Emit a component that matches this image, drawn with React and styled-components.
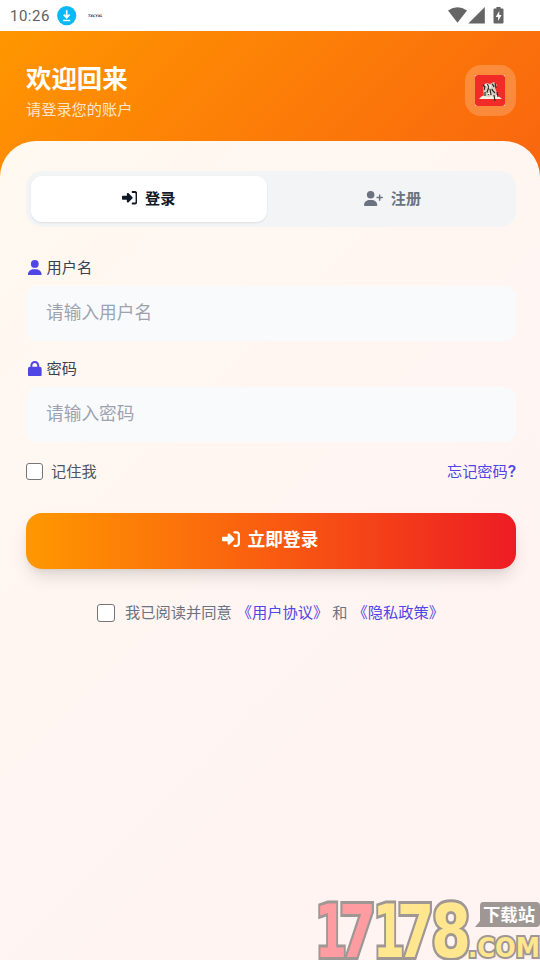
import React from "react";
import styled, { createGlobalStyle } from "styled-components";
import { FaRightToBracket, FaUserPlus, FaUser, FaLock } from "react-icons/fa6";

const GlobalStyle = createGlobalStyle`
  * { box-sizing: border-box; }
  body { margin: 0; overflow: hidden; }
  button, input { font-family: inherit; }
`;

const Screen = styled.div`
  position: relative;
  width: 540px;
  height: 960px;
  overflow: hidden;
  display: flex;
  flex-direction: column;
  font-family: Roboto, "Noto Sans CJK SC", sans-serif;
  background: #fff;
`;

const StatusBar = styled.div`
  height: 31px;
  flex: none;
  display: flex;
  align-items: center;
  padding: 0 35px 0 10px;
  color: #616161;
`;

const Clock = styled.span`
  width: 47px;
  padding-top: 1px;
  font-size: 15px;
  line-height: 30px;
  letter-spacing: 0.5px;
`;

const Notice = styled.svg`
  display: block;
  margin-right: 9px;
`;

const NoticeText = styled.span`
  flex: 1;
  padding-left: 2px;
  color: #23376b;
  font: italic 900 3.4px/8px "DejaVu Sans", sans-serif;
`;

const Page = styled.div`
  flex: 1;
  display: flex;
  flex-direction: column;
  background: linear-gradient(135deg, #ff9600 0%, #f9640f 100%) top / 100% 160px no-repeat;
`;

const Header = styled.header`
  height: 110px;
  flex: none;
  display: flex;
  justify-content: space-between;
  padding: 34px 24px 0 26px;
  color: #fff;
`;

const Title = styled.h1`
  margin: 0;
  font-size: 25.4px;
  line-height: 28px;
  font-weight: 700;
`;

const Subtitle = styled.p`
  margin: 5px 0 0;
  font-size: 15.2px;
  line-height: 24px;
  color: rgba(255, 255, 255, 0.8);
`;

const LogoTile = styled.div`
  width: 51px;
  height: 51px;
  display: grid;
  place-items: center;
  border-radius: 16px;
  background: rgba(255, 255, 255, 0.2);
`;

const Sheet = styled.main`
  flex: 1;
  padding: 30px 24px 0 26px;
  border-radius: 36px 36px 0 0;
  background: linear-gradient(135deg, #fff9f0 0%, #fff5f2 50%, #fff3f1 100%);
`;

const Tabs = styled.div`
  height: 56px;
  display: grid;
  grid-template-columns: 236px 1fr;
  padding: 5px;
  border-radius: 16px;
  background: #f3f4f6;
`;

const Tab = styled.button`
  display: flex;
  align-items: center;
  justify-content: center;
  gap: 8px;
  border: 0;
  padding: 0 ${(p) => (p.$active ? 1 : 0)}px 2px ${(p) => (p.$active ? 0 : 7)}px;
  border-radius: 11px;
  font-size: 15.2px;
  line-height: 20px;
  font-weight: 700;
  color: ${(p) => (p.$active ? "#111827" : "#6b7280")};
  background: ${(p) => (p.$active ? "#fff" : "transparent")};
  box-shadow: ${(p) => (p.$active ? "0 1px 2px rgba(0, 0, 0, 0.09)" : "none")};
`;

const Caption = styled.span`
  margin-top: 1px;
`;

const Field = styled.label`
  display: block;
  margin-top: ${(p) => p.$gap}px;
`;

const FieldLabel = styled.span`
  display: flex;
  align-items: center;
  gap: 4px;
  height: 20px;
  padding-left: 1px;
  font-size: 15.2px;
  line-height: 20px;
  color: #374151;
  svg { color: #4f46e5; margin-top: -1px; }
`;

const Input = styled.input`
  display: block;
  width: 100%;
  height: 55px;
  margin-top: 8px;
  padding: 0 20px 2px;
  border: 0;
  border-radius: 11px;
  outline: 0;
  background: #f9fafb;
  font-size: 17.7px;
  &::placeholder { color: #9ca3af; }
`;

const Options = styled.div`
  display: flex;
  align-items: center;
  height: 20px;
  margin-top: 18px;
  font-size: 15.2px;
  color: #4b5563;
`;

const Checkbox = styled.input`
  appearance: none;
  width: ${(p) => p.$size}px;
  height: ${(p) => p.$size}px;
  margin: 3px ${(p) => p.$space}px 0 0;
  border: 1.4px solid #767676;
  border-radius: 3px;
  background: #fff;
`;

const Link = styled.a`
  color: #4f46e5;
  margin-left: ${(p) => p.$left || 0};
`;

const Mark = styled.span`
  font-weight: 500;
  font-size: 17px;
`;

const Submit = styled.button`
  display: flex;
  align-items: center;
  justify-content: center;
  gap: 8px;
  width: 100%;
  height: 56px;
  margin-top: 33px;
  padding: 0 2px 4px 0;
  border: 0;
  border-radius: 16px;
  color: #fff;
  font-size: 17.7px;
  line-height: 24px;
  font-weight: 700;
  background: linear-gradient(90deg, #ff9800 0%, #f95c10 50%, #ed1c24 100%);
  box-shadow: 0 10px 18px -3px rgba(0, 0, 0, 0.13), 0 4px 7px -3px rgba(0, 0, 0, 0.08);
`;

const Agreement = styled.div`
  display: flex;
  align-items: center;
  height: 20px;
  margin-top: 32px;
  padding-left: 71px;
  font-size: 15.25px;
  white-space: nowrap;
  color: #6b7280;
`;

const Word = styled.span`
  margin: 0 5px 0 4px;
`;

const Watermark = styled.svg`
  position: absolute;
  right: 0;
  bottom: 0;
  text {
    font-family: "DejaVu Sans", sans-serif;
    font-weight: 700;
    paint-order: stroke;
    stroke: #9e9793;
    stroke-linejoin: miter;
  }
  .tag {
    font-family: "Noto Sans CJK SC", sans-serif;
    stroke: none;
  }
`;

const digits = [
  { char: "1", x: 5, width: 32, fill: "#ff9ca1" },
  { char: "7", x: 29, width: 37, fill: "#ff9ca1" },
  { char: "1", x: 63, width: 32, fill: "#ffe68f" },
  { char: "7", x: 87, width: 37, fill: "#ffe68f" },
  { char: "8", x: 121, width: 40, fill: "#ffe68f" },
];

function AppLogo() {
  return (
    <svg width="31" height="31" viewBox="0 0 31 31">
      <rect width="30" height="31" fill="#ffd6bd" />
      <rect width="30" height="31" rx="3" fill="#f12b28" />
      <path d="M4 24 7 21 11 20 22 20 27 24Z" fill="#f8efe3" />
      <path d="M9 10 12 8 15 9 19 7 22 10 20 13 22 18 20 23 17 21 14 22 9 21 8 14Z" fill="#d5d0c3" />
      <path d="M8 10 10 12 9 15M12 9 14 12 12 17 14 20M17 9 19 11 17 15 20 18M20 8 21 13M10 17 10 21M15 14 16 20M19 20 20 26M22 17 23 22" fill="none" stroke="#29251f" strokeWidth="1.1" />
      <path d="M10 9 12 11M15 10 15 13M18 12 18 14M12 18 15 19" fill="none" stroke="#fffdf5" strokeWidth="1.3" />
    </svg>
  );
}

export default function App() {
  return (
    <Screen>
      <GlobalStyle />
      <StatusBar>
        <Clock>10:26</Clock>
        <Notice width="20" height="20" viewBox="0 0 20 20">
          <circle cx="9.7" cy="9.6" r="9.6" fill="#08b9f7" />
          <path d="M9.7 4.3v7M6.8 8.7l2.9 3 2.9-3M6.1 14.5h7.2" fill="none" stroke="#fff" strokeWidth="1.7" />
        </Notice>
        <NoticeText>TXCYXL</NoticeText>
        <svg width="58" height="20" viewBox="0 0 58 20" fill="#656565">
          <path d="M1 4.4Q10.5-2 20 4.4L10.5 16.7Z" />
          <path d="M37.8 1v16.5H21.3Z" />
          <path d="M49.4 1h4.2v1.4h1.9q1 0 1 1v13.1q0 1-1 1h-8q-1 0-1-1V3.4q0-1 1-1h1.9Z" />
          <path d="M52.3 5 48.7 11h2.4v4l3.5-6h-2.3Z" fill="#fff" />
        </svg>
      </StatusBar>
      <Page>
        <Header>
          <div>
            <Title>欢迎回来</Title>
            <Subtitle>请登录您的账户</Subtitle>
          </div>
          <LogoTile><AppLogo /></LogoTile>
        </Header>
        <Sheet>
          <Tabs>
            <Tab $active><FaRightToBracket size={15.5} /><Caption>登录</Caption></Tab>
            <Tab><FaUserPlus size={19} /><Caption>注册</Caption></Tab>
          </Tabs>
          <Field $gap={31}>
            <FieldLabel><FaUser size={15.6} />用户名</FieldLabel>
            <Input placeholder="请输入用户名" />
          </Field>
          <Field $gap={18}>
            <FieldLabel><FaLock size={15.6} />密码</FieldLabel>
            <Input type="password" placeholder="请输入密码" />
          </Field>
          <Options>
            <Checkbox type="checkbox" $size={17} $space={8} />
            记住我
            <Link $left="auto">忘记密码<Mark>?</Mark></Link>
          </Options>
          <Submit><FaRightToBracket size={18} /><Caption>立即登录</Caption></Submit>
          <Agreement>
            <Checkbox type="checkbox" $size={18} $space={10} />
            我已阅读并同意
            <Link $left="5px">《用户协议》</Link>
            <Word>和</Word>
            <Link>《隐私政策》</Link>
          </Agreement>
        </Sheet>
      </Page>
      <Watermark width="230" height="70" viewBox="0 0 230 70">
        {digits.map((d) => (
          <text key={d.x} x={d.x} y="66.5" fontSize="73" textLength={d.width} lengthAdjust="spacingAndGlyphs" fill={d.fill} strokeWidth="6">
            {d.char}
          </text>
        ))}
        <path d="M173 12h53q4 0 4 4v17q0 4-4 4h-61l5-6V16q0-4 3-4Z" fill="#9e9793" />
        <text className="tag" x="173" y="30.5" fontSize="17" textLength="52" lengthAdjust="spacingAndGlyphs" fill="#fff">下载站</text>
        <text x="158" y="67" fontSize="26" textLength="72" lengthAdjust="spacingAndGlyphs" fill="#ffe68f" strokeWidth="4">.COM</text>
      </Watermark>
    </Screen>
  );
}
